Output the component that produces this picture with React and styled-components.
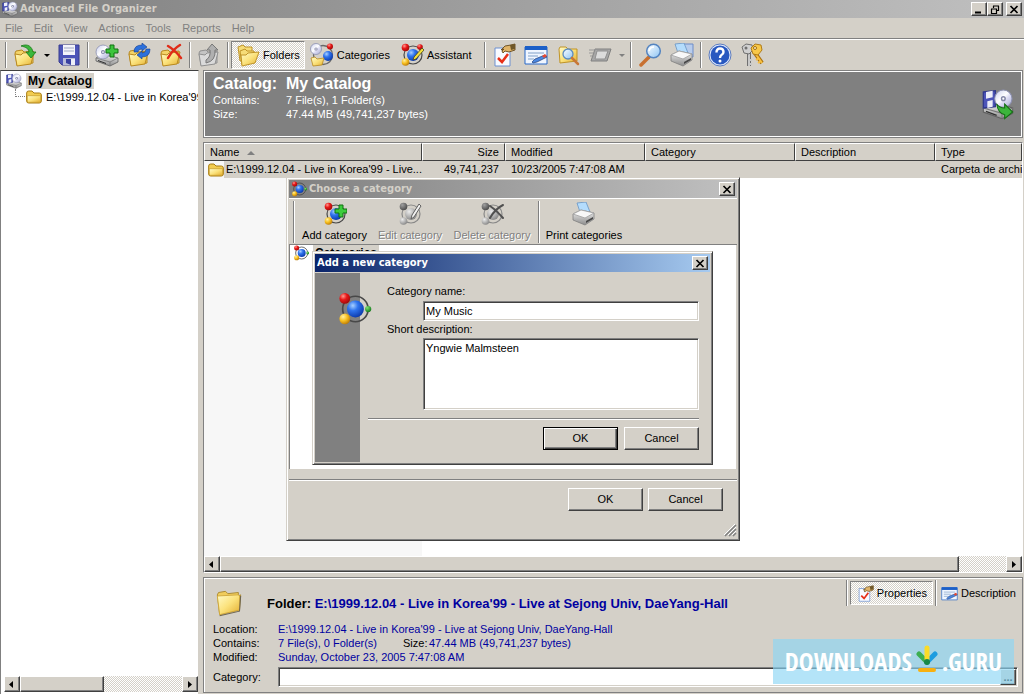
import React from "react";
import styled, { createGlobalStyle, css } from "styled-components";

const FACE = "#d4d0c8";
const SHADOW = "#808080";
const DARK = "#404040";
const NAVY = "#0000a0";

const GlobalStyle = createGlobalStyle`
  *, *::before, *::after { box-sizing: border-box; }
  html, body { margin: 0; padding: 0; }
  body {
    background: ${FACE};
    color: #000;
    font: 11px/14px "Liberation Sans", Arial, sans-serif;
    overflow: hidden;
  }
  button, input, textarea { font: inherit; color: inherit; margin: 0; border-radius: 0; }
  svg { display: block; flex: none; }
`;

const raised = css`
  border: 1px solid;
  border-color: #fff ${DARK} ${DARK} #fff;
  box-shadow: inset -1px -1px 0 ${SHADOW};
`;

const dither = css`
  background: repeating-conic-gradient(${FACE} 0 25%, #fff 0 50%) 0 0 / 2px 2px;
`;

/* ---------- icons ---------- */

const Svg = ({ size = 24, children, ...rest }) => (
  <svg width={size} height={size} viewBox="0 0 24 24" fill="none" aria-hidden="true" {...rest}>
    {children}
  </svg>
);

const HiddenSvg = styled.svg`
  position: absolute;
`;

const Defs = () => (
  <HiddenSvg width="0" height="0" aria-hidden="true">
    <defs>
      <linearGradient id="gFolder" x1="0" y1="0" x2="1" y2="1">
        <stop offset="0" stopColor="#fffbc8" />
        <stop offset="0.5" stopColor="#fbe27c" />
        <stop offset="1" stopColor="#e3ae30" />
      </linearGradient>
      <radialGradient id="gBlue" cx="0.35" cy="0.3" r="0.75">
        <stop offset="0" stopColor="#a8d0ff" />
        <stop offset="0.4" stopColor="#2f74ee" />
        <stop offset="1" stopColor="#0a37a8" />
      </radialGradient>
      <radialGradient id="gRed" cx="0.35" cy="0.3" r="0.75">
        <stop offset="0" stopColor="#ff9a90" />
        <stop offset="0.45" stopColor="#e81818" />
        <stop offset="1" stopColor="#9c0808" />
      </radialGradient>
      <radialGradient id="gYellow" cx="0.35" cy="0.3" r="0.75">
        <stop offset="0" stopColor="#fff0a0" />
        <stop offset="0.5" stopColor="#f8c020" />
        <stop offset="1" stopColor="#b87808" />
      </radialGradient>
      <radialGradient id="gGreen" cx="0.35" cy="0.3" r="0.75">
        <stop offset="0" stopColor="#80e070" />
        <stop offset="1" stopColor="#107818" />
      </radialGradient>
      <radialGradient id="gGray" cx="0.35" cy="0.3" r="0.75">
        <stop offset="0" stopColor="#ececec" />
        <stop offset="1" stopColor="#858585" />
      </radialGradient>
      <radialGradient id="gDarkGray" cx="0.35" cy="0.3" r="0.75">
        <stop offset="0" stopColor="#a0a0a0" />
        <stop offset="1" stopColor="#484848" />
      </radialGradient>
      <linearGradient id="gDisc" x1="0" y1="0" x2="1" y2="1">
        <stop offset="0" stopColor="#c6ccee" />
        <stop offset="0.45" stopColor="#ffffff" />
        <stop offset="0.6" stopColor="#dcdcf4" />
        <stop offset="1" stopColor="#a4a8cc" />
      </linearGradient>
      <linearGradient id="gMetal" x1="0" y1="0" x2="0" y2="1">
        <stop offset="0" stopColor="#f4f4f4" />
        <stop offset="1" stopColor="#8c8c8c" />
      </linearGradient>
      <linearGradient id="gLens" x1="0" y1="0" x2="1" y2="1">
        <stop offset="0" stopColor="#ffffff" />
        <stop offset="1" stopColor="#8cc4f4" />
      </linearGradient>
    </defs>
  </HiddenSvg>
);

const FolderShape = ({ gray }) => (
  <g stroke={gray ? "#909090" : "#b98a20"} strokeLinejoin="round">
    <path d="M2 10l1-2 6-1 2 2 9-1v12l-16 2z" fill={gray ? "#c4c4c4" : "#f4d468"} />
    <path d="M2 11l6 1 2-2 11-1-3 12-14 2z" fill={gray ? "#dadada" : "url(#gFolder)"} />
  </g>
);

const FlatFolder = ({ size = 16 }) => (
  <Svg size={size}>
    <path d="M1 6q0-3 3-3h5l3 3h8q3 0 3 3v9q0 3-3 3H4q-3 0-3-3z" fill="#f2cc50" stroke="#a87c14" strokeWidth="1.5" />
    <path d="M2 10h20v8q0 2-2 2H4q-2 0-2-2z" fill="url(#gFolder)" stroke="#c49a2c" />
  </Svg>
);

const BigFolder = () => (
  <Svg size={28}>
    <path d="M2 5l1-2 6-1 2 2 9-1v3l2-1-1 13-17 4z" fill="#f0cc5c" stroke="#a88830" strokeWidth="0.8" />
    <path d="M2 6l18-1 1 1v12L4 22z" fill="url(#gFolder)" stroke="#d0a83c" strokeWidth="0.8" />
    <path d="M4 23l17-4 1-13" stroke="#6c6450" strokeWidth="0.9" />
  </Svg>
);

const OpenIcon = () => (
  <Svg>
    <FolderShape />
    <path d="M8 3c7-3 11 1 12 6h3l-5 6-5-6h3c0-3-3-5-8-6z" fill="#3cb83c" stroke="#187818" strokeWidth="0.8" />
  </Svg>
);

const FloppyIcon = () => (
  <Svg>
    <path d="M2 2h20v20H5l-3-3z" fill="#4c54b8" stroke="#383c90" />
    <path d="M6 2h12v10H6z" fill="#f4f4fa" />
    <path d="M7 5h10M7 8h10" stroke="#a0a8c4" />
    <path d="M6 15h12v7H6z" fill="#b8bcd8" />
    <path d="M9 16h5v6l-5-2z" fill="#3840a0" />
    <path d="M14 16h4v6h-4z" fill="#eceef8" />
  </Svg>
);

const DriveShape = () => (
  <g>
    <path d="M1 15l7-4 15 4v4l-8 4-14-5z" fill="url(#gMetal)" stroke="#606060" strokeWidth="0.8" />
    <path d="M1 15l14 4 8-4M15 19v4" stroke="#787878" strokeWidth="0.8" />
    <path d="M3 17.500l8 3" stroke="#303030" />
  </g>
);

const DiscShape = ({ cx, cy, r }) => (
  <g>
    <circle cx={cx} cy={cy} r={r} fill="url(#gDisc)" stroke="#8c90b0" strokeWidth="0.8" />
    <circle cx={cx} cy={cy} r={r / 3.4} fill="#8488a8" />
    <circle cx={cx} cy={cy} r={r / 8} fill="#fff" />
  </g>
);

const CatalogIcon = ({ size = 16, arrow }) => (
  <Svg size={size}>
    <DriveShape />
    <path d="M1 3l9-1v12l-9 1z" fill="#4c54b8" stroke="#30388c" />
    <path d="M3 3l5-1v5l-5 1zM4 10l4-1v5l-4 1z" fill="#eceef8" />
    <DiscShape cx={16} cy={8} r={6.500} />
    {arrow && <path d="M11 12q2 3 6 3v-3l6 6-6 5v-3q-5-1-6-8z" fill="#3cb43c" stroke="#146c14" strokeWidth="0.8" />}
  </Svg>
);

const AddDiscIcon = () => (
  <Svg>
    <DriveShape />
    <DiscShape cx={8} cy={9} r={7} />
    <path d="M15 2h4v4h4v4h-4v4h-4v-4h-4V6h4z" fill="#3cc43c" stroke="#107010" />
  </Svg>
);

const RefreshIcon = () => (
  <Svg>
    <FolderShape />
    <path d="M7 9q0-7 8-7V0l5 4-5 4V6q-4 0-4 3z" fill="#2c70dc" stroke="#103c90" strokeWidth="0.6" />
    <path d="M23 6q0 8-8 8v2l-5-4 5-4v2q4 0 4-4z" fill="#2c70dc" stroke="#103c90" strokeWidth="0.6" />
  </Svg>
);

const DeleteIcon = () => (
  <Svg>
    <FolderShape />
    <path d="M9 3q7 4 13 12M21 2q-7 4-12 13" stroke="#e02c18" strokeWidth="2.500" strokeLinecap="round" />
  </Svg>
);

const UpIcon = () => (
  <Svg>
    <FolderShape gray />
    <path d="M9 17q5-3 4-10h-3l5-6 6 6h-3q1 11-9 13z" fill="#b0b0b0" stroke="#787878" />
  </Svg>
);

const FoldersIcon = () => (
  <Svg>
    <g stroke="#c09428" strokeLinejoin="round">
      <path d="M2 4l5-2 2 2 7 0v11l-12 3z" fill="#f6dc78" />
      <path d="M4 8l5-2 2 2 7 0v10l-12 4z" fill="#f6dc78" />
      <path d="M5 12l5 0 2-2 11-1-4 11-13 3z" fill="url(#gFolder)" />
    </g>
  </Svg>
);

const Orbit = ({ size = 24, gray, children }) => {
  const paint = (name) => `url(#${gray ? "gGray" : name})`;
  return (
    <Svg size={size}>
      <circle cx="13" cy="12" r="9" stroke={gray ? "#888" : "#484848"} strokeWidth="1.2" />
      <circle cx="13" cy="12" r="6" fill={paint("gBlue")} />
      <circle cx="5.500" cy="4.500" r="3.800" fill={gray ? "url(#gDarkGray)" : "url(#gRed)"} />
      <circle cx="5.500" cy="19" r="3.800" fill={paint("gYellow")} />
      {children || <circle cx="22" cy="12" r="2.200" fill={paint("gGreen")} />}
    </Svg>
  );
};

const CategoriesIcon = () => (
  <Svg>
    <circle cx="13" cy="12" r="9.500" stroke="#686868" strokeWidth="1.3" />
    <circle cx="18" cy="13" r="5" fill="url(#gBlue)" />
    <circle cx="20" cy="3.500" r="3" fill="url(#gRed)" />
    <DiscShape cx={6} cy={6} r={5.500} />
    <path d="M1 15l4-1 2 2 7-1-2 7-9 1z" fill="url(#gFolder)" stroke="#b98a20" strokeWidth="0.8" />
  </Svg>
);

const AssistantIcon = () => (
  <Orbit>
    <circle cx="20" cy="4" r="2.800" fill="url(#gRed)" />
    <path d="M22 5l2 2-8 9-3 1 1-3z" fill="#f4e03c" stroke="#404020" strokeWidth="0.8" />
  </Orbit>
);

const AddCategoryIcon = () => (
  <Orbit>
    <path d="M16 3h4v4h4v4h-4v4h-4v-4h-4V7h4z" fill="#3ccc3c" stroke="#107010" />
  </Orbit>
);

const EditCategoryIcon = () => (
  <Orbit gray>
    <path d="M21 2l2 2-7 11-3 2 1-4z" fill="#f0f0f0" stroke="#606060" />
  </Orbit>
);

const DeleteCategoryIcon = () => (
  <Orbit gray>
    <path d="M10 4q6 4 13 12M23 3q-8 4-13 13" stroke="#505050" strokeWidth="2" strokeLinecap="round" />
  </Orbit>
);

const PropertiesIcon = ({ size = 24 }) => (
  <Svg size={size}>
    <path d="M3 5h15v18H3z" fill="#f8faff" stroke="#6c90d0" />
    <path d="M6 15l4 4 6-8" stroke="#e83018" strokeWidth="2.500" />
    <path d="M9 7l4-4 6-1 4-1v6l-6 2-4-1-2 2-1-2 2-2z" fill="#e0b468" stroke="#64481c" strokeWidth="0.9" />
    <path d="M18 2l5-1v5l-4 1z" fill="#705828" />
  </Svg>
);

const DescriptionIcon = ({ size = 24 }) => (
  <Svg size={size}>
    <path d="M1 4h22v17H1z" fill="#f0f6ff" stroke="#2868c8" />
    <path d="M1 3h22v4H1z" fill="#1c60c8" />
    <path d="M4 10h16M4 13h10M4 16h6" stroke="#80a0c8" />
    <path d="M8 19l3-3 10-4 2 2-10 5-4 1z" fill="#4c88e0" stroke="#203c78" strokeWidth="0.7" />
    <path d="M18 13l3-2 2 2-3 2z" fill="#e84830" />
  </Svg>
);

const FindFolderIcon = () => (
  <Svg>
    <path d="M3 6l1-2h6l2 2h9v12l-17 2z" fill="url(#gFolder)" stroke="#c09428" />
    <circle cx="12" cy="11" r="5" fill="url(#gLens)" stroke="#5c8cc0" strokeWidth="1.3" />
    <path d="M16 15l6 6" stroke="#c87838" strokeWidth="2.500" strokeLinecap="round" />
  </Svg>
);

const MoveIcon = () => (
  <Svg>
    <path d="M7 6h16l-4 12H3z" fill="#a8a8a8" stroke="#808080" />
    <path d="M9 8h11l-3 8H7z" fill="#dcdcdc" stroke="#909090" />
    <path d="M1 7h7M1 10h6M2 13h4" stroke="#989898" />
  </Svg>
);

const SearchIcon = () => (
  <Svg>
    <path d="M3 22l8-8" stroke="#c87030" strokeWidth="3.500" strokeLinecap="round" />
    <circle cx="15.500" cy="8" r="6.800" fill="url(#gLens)" stroke="#5484c0" strokeWidth="1.500" />
    <path d="M11 8q1-4 5-4" stroke="#fff" strokeWidth="1.500" />
  </Svg>
);

const PrinterIcon = ({ stack }) => (
  <Svg>
    {stack && <path d="M13 1h10v13H13z" fill="#b8ccec" stroke="#6c8cc8" />}
    <path d="M5 1l9-1 4 10H8z" fill="#b4dcfc" stroke="#6894c4" strokeWidth="0.8" />
    <path d="M1 12l8-4 13 3v6l-9 6-12-5z" fill="url(#gMetal)" stroke="#808080" strokeWidth="0.8" />
    <path d="M1 12l12 4 9-5-13-3z" fill="#f8f8f8" stroke="#a0a0a0" strokeWidth="0.8" />
    <path d="M14 19l7-4v2l-7 4z" fill="#484848" />
  </Svg>
);

const HelpIcon = () => (
  <Svg>
    <circle cx="12" cy="12" r="11" fill="#e4ecfc" stroke="#5c7cc0" />
    <circle cx="12" cy="12" r="9.500" fill="#2858c0" />
    <path d="M8.500 9.500q0-4 3.500-4t3.500 3.500q0 2-2 3-1.500 1-1.500 3" stroke="#fff" strokeWidth="2.400" />
    <circle cx="12" cy="18" r="1.500" fill="#fff" />
  </Svg>
);

const KeysIcon = () => (
  <Svg>
    <path d="M9 9v14" stroke="#707070" strokeWidth="4" />
    <path d="M9 9v14M9 17h3M9 21h3" stroke="#c8c8c8" strokeWidth="2" />
    <path d="M2 4l4-3 6 1 1 5-4 4-5-1z" fill="#d0d0d0" stroke="#707070" />
    <path d="M15 10l7 10" stroke="#a87010" strokeWidth="4" />
    <path d="M15 10l7 10M19 15l-3 2M21 18l-3 2" stroke="#f8c040" strokeWidth="2" />
    <path d="M11 5l4-4 6 1 1 5-4 5-5-1z" fill="#f8c848" stroke="#b07c18" />
    <circle cx="15" cy="5" r="1.500" fill="#fff4cc" stroke="#a06c10" />
    <circle cx="6" cy="5" r="1.500" fill="#707070" />
  </Svg>
);

const Triangle = ({ dir = "down", color = "#000" }) => {
  const d = {
    down: "M0 1h6L3 4z",
    left: "M4 0v7L0 3.500z",
    right: "M1 0v7l4-3.500z",
  }[dir];
  return (
    <svg width="6" height={dir === "down" ? 4 : 7} aria-hidden="true">
      <path d={d} fill={color} />
    </svg>
  );
};

/* ---------- shared controls ---------- */

const CaptionButton = styled.button`
  ${raised}
  width: 16px;
  height: 14px;
  padding: 0;
  display: flex;
  align-items: center;
  justify-content: center;
  background: ${FACE};
`;

const Glyph = ({ kind }) => (
  <svg width="10" height="9" viewBox="0 0 10 9" fill="none" stroke="#000" aria-hidden="true">
    {kind === "min" && <path d="M1 7.500h6" strokeWidth="2" />}
    {kind === "restore" && <path d="M3 1h6M3.500 1v2M8.500 1v4.500H7M1 4h6M1.500 4v4.500h5V4" strokeWidth="1.200" />}
    {kind === "close" && <path d="M1.500 1l7 7M8.500 1l-7 7" strokeWidth="1.700" />}
  </svg>
);

const TitleBar = styled.header`
  display: flex;
  align-items: center;
  gap: 2px;
  flex: none;
  height: 18px;
  padding: 0 2px;
  color: ${(p) => (p.$active ? "#fff" : FACE)};
  background: ${(p) =>
    p.$active
      ? "linear-gradient(90deg, #0a246a, #a6caf0)"
      : "linear-gradient(90deg, #808080, #c0c0c0)"};
`;

const Title = styled.h1`
  flex: 1;
  margin: 0;
  font: bold 11px/18px "DejaVu Sans Condensed", "Open Sans", sans-serif;
`;

const CaptionGroup = styled.div`
  display: flex;
  margin-right: 1px;
`;

const Separator = styled.span`
  flex: none;
  width: 6px;
  height: ${(p) => (p.$tall ? "42px" : "26px")};
  display: flex;
  justify-content: center;
  &::before {
    content: "";
    width: 2px;
    border-left: 1px solid ${SHADOW};
    border-right: 1px solid #fff;
  }
`;

const PushButton = styled.button`
  ${raised}
  width: 75px;
  height: 23px;
  padding: 0 0 2px;
  background: ${FACE};
  ${(p) =>
    p.$default &&
    css`
      outline: 1px solid #000;
      outline-offset: -1px;
      border-color: #000;
      box-shadow: inset 1px 1px 0 #fff, inset -1px -1px 0 ${DARK}, inset -2px -2px 0 ${SHADOW};
    `}
`;

const Rule = styled.hr`
  flex: none;
  height: 2px;
  margin: 0;
  border: 0;
  border-top: 1px solid ${SHADOW};
  border-bottom: 1px solid #fff;
`;

const ButtonRow = styled.div`
  display: flex;
  justify-content: flex-end;
  gap: ${(p) => p.$gap};
  padding: ${(p) => p.$pad};
`;

const sunken = css`
  border: 1px solid;
  border-color: ${SHADOW} #fff #fff ${SHADOW};
  box-shadow: inset 1px 1px 0 ${DARK}, inset -1px -1px 0 ${FACE};
  outline: none;
  background: #fff;
`;

/* ---------- scroll bar ---------- */

const Track = styled.div`
  ${dither}
  display: flex;
  flex: none;
  height: 16px;
`;

const ScrollButton = styled.button`
  ${raised}
  width: 16px;
  height: 16px;
  padding: 0;
  display: flex;
  align-items: center;
  justify-content: center;
  background: ${FACE};
`;

const Thumb = styled.div`
  ${raised}
  width: ${(p) => p.$width};
  background: ${FACE};
`;

const Lane = styled.div`
  flex: 1;
  display: flex;
`;

const ScrollBar = ({ thumb }) => (
  <Track>
    <ScrollButton aria-label="Scroll left"><Triangle dir="left" /></ScrollButton>
    <Lane><Thumb $width={thumb} /></Lane>
    <ScrollButton aria-label="Scroll right"><Triangle dir="right" /></ScrollButton>
  </Track>
);

/* ---------- main window ---------- */

const Window = styled.div`
  position: relative;
  display: flex;
  flex-direction: column;
  height: 100vh;
  overflow: hidden;
`;

const MenuBar = styled.nav`
  display: flex;
  flex: none;
  gap: 11px;
  height: 20px;
  padding: 0 5px;
`;

const MenuItem = styled.button`
  padding: 0;
  border: 0;
  background: none;
  color: ${SHADOW};
  line-height: 20px;
`;

const Toolbar = styled.div`
  display: flex;
  align-items: center;
  flex: none;
  height: 30px;
  padding: 0 3px;
`;

const ToolButton = styled.button`
  flex: none;
  display: flex;
  align-items: center;
  justify-content: center;
  gap: 3px;
  width: ${(p) => p.$width || "auto"};
  height: 28px;
  padding: 0 ${(p) => (p.$width ? "0" : "4px")};
  border: 1px solid transparent;
  background: none;
  ${(p) => p.$pressed && css`${dither} border-color: ${SHADOW} #fff #fff ${SHADOW};`}
`;

const ToolGroup = styled.div`
  display: flex;
  margin-right: 5px;
`;

const Body = styled.div`
  flex: 1;
  min-height: 0;
  display: flex;
  gap: 4px;
  padding-right: 1px;
`;

const TreePane = styled.aside`
  flex: none;
  width: 199px;
  display: flex;
  flex-direction: column;
  padding: 0 0 2px 3px;
  border-top: 1px solid ${DARK};
  border-left: 1px solid ${SHADOW};
  border-right: 1px solid ${FACE};
  background: #fff;
`;

const Tree = styled.ul`
  flex: 1;
  margin: 0;
  padding: 2px 0 0 2px;
  list-style: none;
  overflow: hidden;
  white-space: nowrap;
`;

const TreeRow = styled.li`
  display: flex;
  align-items: center;
  height: 16px;
  gap: 4px;
`;

const Selected = styled.span`
  padding: 0 2px;
  height: 16px;
  font-weight: bold;
  font-size: 12px;
  line-height: 16px;
  background: ${FACE};
`;

const Elbow = styled.span`
  flex: none;
  width: 12px;
  height: 8px;
  margin: 0 -5px 8px 9px;
  border: 1px dotted ${SHADOW};
  border-width: 0 0 1px 1px;
`;

const Content = styled.main`
  flex: 1;
  min-width: 0;
  display: flex;
  flex-direction: column;
  gap: 4px;
`;

const Banner = styled.section`
  flex: none;
  display: flex;
  align-items: center;
  justify-content: space-between;
  height: 68px;
  padding: 0 8px 0 9px;
  border: 1px solid ${SHADOW};
  box-shadow: inset 0 0 0 1px #fff;
  color: #fff;
  background: ${SHADOW};
`;

const BannerGrid = styled.dl`
  display: grid;
  grid-template-columns: 73px auto;
  margin: 0 0 12px;
  dd { margin: 0; }
`;

const BannerHead = styled.span`
  font: bold 16px/18px "Liberation Sans", Arial, sans-serif;
`;

const ListPane = styled.section`
  flex: 1;
  min-height: 0;
  display: flex;
  flex-direction: column;
  border: 1px solid ${SHADOW};
  border-right-color: #fff;
  border-bottom-color: #fff;
  background: #fff;
`;

const ListArea = styled.div`
  flex: 1;
  overflow: hidden;
  background: linear-gradient(#f7f7f7, #f7f7f7) 0 0 / 218px 100% no-repeat #fff;
`;

const Table = styled.table`
  width: 100%;
  table-layout: fixed;
  border-collapse: separate;
  border-spacing: 0;
  white-space: nowrap;
`;

const Col = styled.col`
  width: ${(p) => p.$width};
`;

const Th = styled.th`
  height: 18px;
  padding: 0 5px;
  font-weight: normal;
  text-align: ${(p) => (p.$right ? "right" : "left")};
  border: 1px solid;
  border-color: #fff ${DARK} ${DARK} #fff;
  background: ${FACE};
  overflow: hidden;
`;

const Td = styled.td`
  height: 17px;
  padding: 0 6px;
  line-height: 17px;
  text-align: ${(p) => (p.$right ? "right" : "left")};
  background: ${FACE};
  overflow: hidden;
`;

const NameCell = styled.div`
  display: flex;
  align-items: center;
  gap: 2px;
  margin: 0 -6px;
  padding-left: 4px;
  background: linear-gradient(#f7f7f7, #f7f7f7) 0 0 / 20px 100% no-repeat;
`;

const SortMark = styled.svg`
  display: inline-block;
  margin-left: 8px;
  vertical-align: middle;
`;

const Details = styled.section`
  flex: none;
  height: 116px;
  padding: 2px 4px 4px 9px;
  margin-bottom: 1px;
  border: 1px solid ${SHADOW};
  box-shadow: inset 1px 1px 0 #fff;
`;

const DetailsTop = styled.div`
  display: flex;
  align-items: flex-start;
  height: 42px;
`;

const DetailsFolder = styled.div`
  width: 54px;
  padding: 9px 0 0 2px;
`;

const DetailsTitle = styled.h2`
  flex: 1;
  margin: 0;
  padding-top: 16px;
  font: bold 13px/16px "Liberation Sans", Arial, sans-serif;
  white-space: nowrap;
  span { color: ${NAVY}; }
`;

const DetailTabs = styled.div`
  display: flex;
  align-items: center;
`;

const TabButton = styled.button`
  display: flex;
  align-items: center;
  gap: 3px;
  height: 24px;
  padding: 0 1px;
  border: 1px solid transparent;
  background: none;
  ${(p) =>
    p.$pressed &&
    css`
      ${dither}
      padding: 0 5px 0 6px;
      border-color: ${SHADOW} #fff #fff ${SHADOW};
    `}
`;

const Facts = styled.dl`
  display: grid;
  grid-template-columns: 65px 125px 26px auto;
  margin: 0;
  dd { margin: 0; color: ${NAVY}; white-space: nowrap; }
`;

const WideFact = styled.dd`
  grid-column: 2 / -1;
`;

const CategoryRow = styled.div`
  display: flex;
  align-items: center;
  height: 20px;
  margin-top: 3px;
  label { width: 65px; }
`;

const CategoryBox = styled.div`
  ${sunken}
  flex: 1;
  display: flex;
  height: 20px;
  padding: 1px;
`;

const PlainInput = styled.input`
  flex: 1;
  min-width: 0;
  padding: 0 2px;
  border: 0;
  outline: none;
  background: #fff;
`;

const MoreButton = styled.button`
  ${raised}
  width: 16px;
  padding: 0;
  line-height: 12px;
  font-weight: bold;
  background: ${FACE};
`;

/* ---------- dialogs ---------- */

const Dialog = styled.section`
  position: absolute;
  left: ${(p) => p.$left};
  top: ${(p) => p.$top};
  width: ${(p) => p.$width};
  display: flex;
  flex-direction: column;
  padding: 2px;
  border: 1px solid;
  border-color: ${FACE} ${DARK} ${DARK} ${FACE};
  box-shadow: inset 1px 1px 0 #fff, inset -1px -1px 0 ${SHADOW};
  background: ${FACE};
`;

const DialogTools = styled.div`
  display: flex;
  align-items: center;
  height: 47px;
  padding: 0 2px;
  border-top: 1px solid #fff;
  border-bottom: 1px solid ${SHADOW};
`;

const DialogTool = styled.button`
  display: flex;
  flex-direction: column;
  align-items: center;
  gap: 2px;
  width: ${(p) => p.$width};
  padding: 0;
  border: 0;
  background: none;
  white-space: nowrap;
  &:disabled { color: ${SHADOW}; text-shadow: 1px 1px 0 #fff; }
`;

const CategoryList = styled.ul`
  height: 224px;
  margin: 0 1px 10px 0;
  padding: 0 0 0 3px;
  list-style: none;
  border-left: 1px solid ${SHADOW};
  background: #fff;
`;

const Grip = styled.div`
  display: flex;
  justify-content: flex-end;
  height: 14px;
`;

const FormLayout = styled.div`
  display: grid;
  grid-template-columns: 45px 1fr;
  margin-top: 1px;
`;

const SideBand = styled.div`
  padding: 19px 0 0 22px;
  background: ${SHADOW};
  svg { overflow: visible; }
`;

const Form = styled.form`
  display: flex;
  flex-direction: column;
  padding: 10px 11px 12px 8px;
`;

const Label = styled.label`
  padding-left: 19px;
  line-height: 16px;
`;

const NameInput = styled.input`
  ${sunken}
  height: 20px;
  margin: 2px 0 0 55px;
  padding: 0 2px;
`;

const Memo = styled.textarea`
  ${sunken}
  height: 72px;
  margin: 1px 0 8px 55px;
  padding: 2px;
  line-height: 14px;
  resize: none;
`;

/* ---------- site mark ---------- */

const SiteMark = styled.div`
  position: absolute;
  right: 10px;
  bottom: 10px;
  display: flex;
  align-items: center;
  justify-content: center;
  gap: 4px;
  width: 241px;
  height: 45px;
  color: #fff;
  background: rgba(140, 214, 245, 0.65);
  font: bold 25px/45px "Liberation Sans Narrow", "Open Sans Condensed", "DejaVu Sans Condensed", sans-serif;
`;

const MarkArrow = styled.svg`
  margin-bottom: 6px;
`;

const DownloadArrow = () => (
  <MarkArrow width="22" height="28" viewBox="0 0 22 28" fill="none" strokeLinecap="round" aria-hidden="true">
    <path d="M3 9l8 8" stroke="#3cae50" strokeWidth="5" />
    <path d="M19 9l-8 8" stroke="#1c9ce0" strokeWidth="5" />
    <path d="M11 3v11" stroke="#fbdc28" strokeWidth="5" />
    <circle cx="11" cy="17" r="3" fill="#188848" />
    <path d="M4 25h14" stroke="#f8b010" strokeWidth="4" />
  </MarkArrow>
);

const MENUS = ["File", "Edit", "View", "Actions", "Tools", "Reports", "Help"];

const Tool = ({ icon: Icon, label }) => (
  <ToolButton $width="32px" aria-label={label}><Icon /></ToolButton>
);

export default function App() {
  return (
    <Window>
      <GlobalStyle />
      <Defs />
      <TitleBar>
        <CatalogIcon size={16} />
        <Title>Advanced File Organizer</Title>
        <CaptionGroup>
          <CaptionButton aria-label="Minimize"><Glyph kind="min" /></CaptionButton>
          <CaptionButton aria-label="Restore"><Glyph kind="restore" /></CaptionButton>
        </CaptionGroup>
        <CaptionButton aria-label="Close"><Glyph kind="close" /></CaptionButton>
      </TitleBar>
      <MenuBar>
        {MENUS.map((m) => <MenuItem key={m}>{m}</MenuItem>)}
      </MenuBar>
      <Rule />
      <Toolbar>
        <Separator />
        <Tool icon={OpenIcon} label="Open" />
        <ToolButton $width="12px" aria-label="Open recent"><Triangle /></ToolButton>
        <Tool icon={FloppyIcon} label="Save" />
        <Separator />
        <Tool icon={AddDiscIcon} label="Add disc" />
        <Tool icon={RefreshIcon} label="Refresh folder" />
        <Tool icon={DeleteIcon} label="Delete folder" />
        <Separator />
        <Tool icon={UpIcon} label="Up" />
        <Separator />
        <ToolGroup>
          <ToolButton $pressed><FoldersIcon />Folders</ToolButton>
          <ToolButton><CategoriesIcon />Categories</ToolButton>
          <ToolButton><AssistantIcon />Assistant</ToolButton>
        </ToolGroup>
        <Separator />
        <Tool icon={PropertiesIcon} label="Properties" />
        <Tool icon={DescriptionIcon} label="Description" />
        <Tool icon={FindFolderIcon} label="Find folder" />
        <Tool icon={MoveIcon} label="Move" />
        <ToolButton $width="12px" aria-label="Move options"><Triangle color="#808080" /></ToolButton>
        <Separator />
        <Tool icon={SearchIcon} label="Search" />
        <ToolButton $width="32px" aria-label="Print"><PrinterIcon stack /></ToolButton>
        <Separator />
        <Tool icon={HelpIcon} label="Help" />
        <Tool icon={KeysIcon} label="Register" />
      </Toolbar>

      <Body>
        <TreePane>
          <Tree>
            <TreeRow><CatalogIcon size={16} /><Selected>My Catalog</Selected></TreeRow>
            <TreeRow><Elbow /><FlatFolder size={16} />E:\1999.12.04 - Live in Korea'99</TreeRow>
          </Tree>
          <ScrollBar thumb="84px" />
        </TreePane>

        <Content>
          <Banner>
            <BannerGrid>
              <dt><BannerHead>Catalog:</BannerHead></dt>
              <dd><BannerHead>My Catalog</BannerHead></dd>
              <dt>Contains:</dt>
              <dd>7 File(s), 1 Folder(s)</dd>
              <dt>Size:</dt>
              <dd>47.44 MB (49,741,237 bytes)</dd>
            </BannerGrid>
            <CatalogIcon size={32} arrow />
          </Banner>

          <ListPane>
            <ListArea>
              <Table>
                <colgroup>
                  <Col $width="218px" />
                  <Col $width="83px" />
                  <Col $width="140px" />
                  <Col $width="150px" />
                  <Col $width="140px" />
                  <col />
                </colgroup>
                <thead>
                  <tr>
                    <Th>
                      Name
                      <SortMark width="8" height="4"><path d="M0 4h8L4 0z" fill="#808080" /></SortMark>
                    </Th>
                    <Th $right>Size</Th>
                    <Th>Modified</Th>
                    <Th>Category</Th>
                    <Th>Description</Th>
                    <Th>Type</Th>
                  </tr>
                </thead>
                <tbody>
                  <tr>
                    <Td><NameCell><FlatFolder size={16} />E:\1999.12.04 - Live in Korea'99 - Live...</NameCell></Td>
                    <Td $right>49,741,237</Td>
                    <Td>10/23/2005 7:47:08 AM</Td>
                    <Td />
                    <Td />
                    <Td>Carpeta de archivos</Td>
                  </tr>
                </tbody>
              </Table>
            </ListArea>
            <ScrollBar thumb="94%" />
          </ListPane>

          <Details>
            <DetailsTop>
              <DetailsFolder><BigFolder /></DetailsFolder>
              <DetailsTitle>
                Folder: <span>E:\1999.12.04 - Live in Korea'99 - Live at Sejong Univ, DaeYang-Hall</span>
              </DetailsTitle>
              <DetailTabs>
                <Separator />
                <TabButton $pressed><PropertiesIcon size={17} />Properties</TabButton>
                <Separator />
                <TabButton><DescriptionIcon size={17} />Description</TabButton>
              </DetailTabs>
            </DetailsTop>
            <Facts>
              <dt>Location:</dt>
              <WideFact>E:\1999.12.04 - Live in Korea'99 - Live at Sejong Univ, DaeYang-Hall</WideFact>
              <dt>Contains:</dt>
              <dd>7 File(s), 0 Folder(s)</dd>
              <dt>Size:</dt>
              <dd>47.44 MB (49,741,237 bytes)</dd>
              <dt>Modified:</dt>
              <WideFact>Sunday, October 23, 2005 7:47:08 AM</WideFact>
            </Facts>
            <CategoryRow>
              <label htmlFor="category">Category:</label>
              <CategoryBox>
                <PlainInput id="category" type="text" />
                <MoreButton aria-label="Choose a category">...</MoreButton>
              </CategoryBox>
            </CategoryRow>
          </Details>
        </Content>
      </Body>

      <Dialog $left="286px" $top="177px" $width="454px">
        <TitleBar>
          <Orbit size={16} />
          <Title as="h2">Choose a category</Title>
          <CaptionButton aria-label="Close"><Glyph kind="close" /></CaptionButton>
        </TitleBar>
        <DialogTools>
          <Separator $tall />
          <DialogTool $width="75px"><AddCategoryIcon />Add category</DialogTool>
          <DialogTool $width="76px" disabled><EditCategoryIcon />Edit category</DialogTool>
          <DialogTool $width="88px" disabled><DeleteCategoryIcon />Delete category</DialogTool>
          <Separator $tall />
          <DialogTool $width="84px"><PrinterIcon />Print categories</DialogTool>
        </DialogTools>
        <CategoryList>
          <TreeRow><Orbit size={16} /><Selected>Categories</Selected></TreeRow>
        </CategoryList>
        <Rule />
        <ButtonRow $gap="5px" $pad="7px 14px 13px 0">
          <PushButton>OK</PushButton>
          <PushButton>Cancel</PushButton>
        </ButtonRow>
        <Grip>
          <svg width="13" height="13" fill="none" aria-hidden="true">
            <path d="M1 12L12 1M5 12l7-7M9 12l3-3" stroke="#808080" strokeWidth="1.500" />
            <path d="M0 11L11 0M4 11l8-8M8 11l4-4" stroke="#fff" />
          </svg>
        </Grip>
      </Dialog>

      <Dialog $left="312px" $top="251px" $width="401px">
        <TitleBar $active>
          <Title as="h2">Add a new category</Title>
          <CaptionButton aria-label="Close"><Glyph kind="close" /></CaptionButton>
        </TitleBar>
        <FormLayout>
          <SideBand><Orbit size={34} /></SideBand>
          <Form>
            <Label htmlFor="category-name">Category name:</Label>
            <NameInput id="category-name" type="text" defaultValue="My Music" />
            <Label htmlFor="short-description">Short description:</Label>
            <Memo id="short-description" defaultValue="Yngwie Malmsteen" />
            <Rule />
            <ButtonRow $gap="6px" $pad="7px 0 0 0">
              <PushButton type="button" $default>OK</PushButton>
              <PushButton type="button">Cancel</PushButton>
            </ButtonRow>
          </Form>
        </FormLayout>
      </Dialog>

      <SiteMark>
        <span>DOWNLOADS</span>
        <DownloadArrow />
        <span>.GURU</span>
      </SiteMark>
    </Window>
  );
}
